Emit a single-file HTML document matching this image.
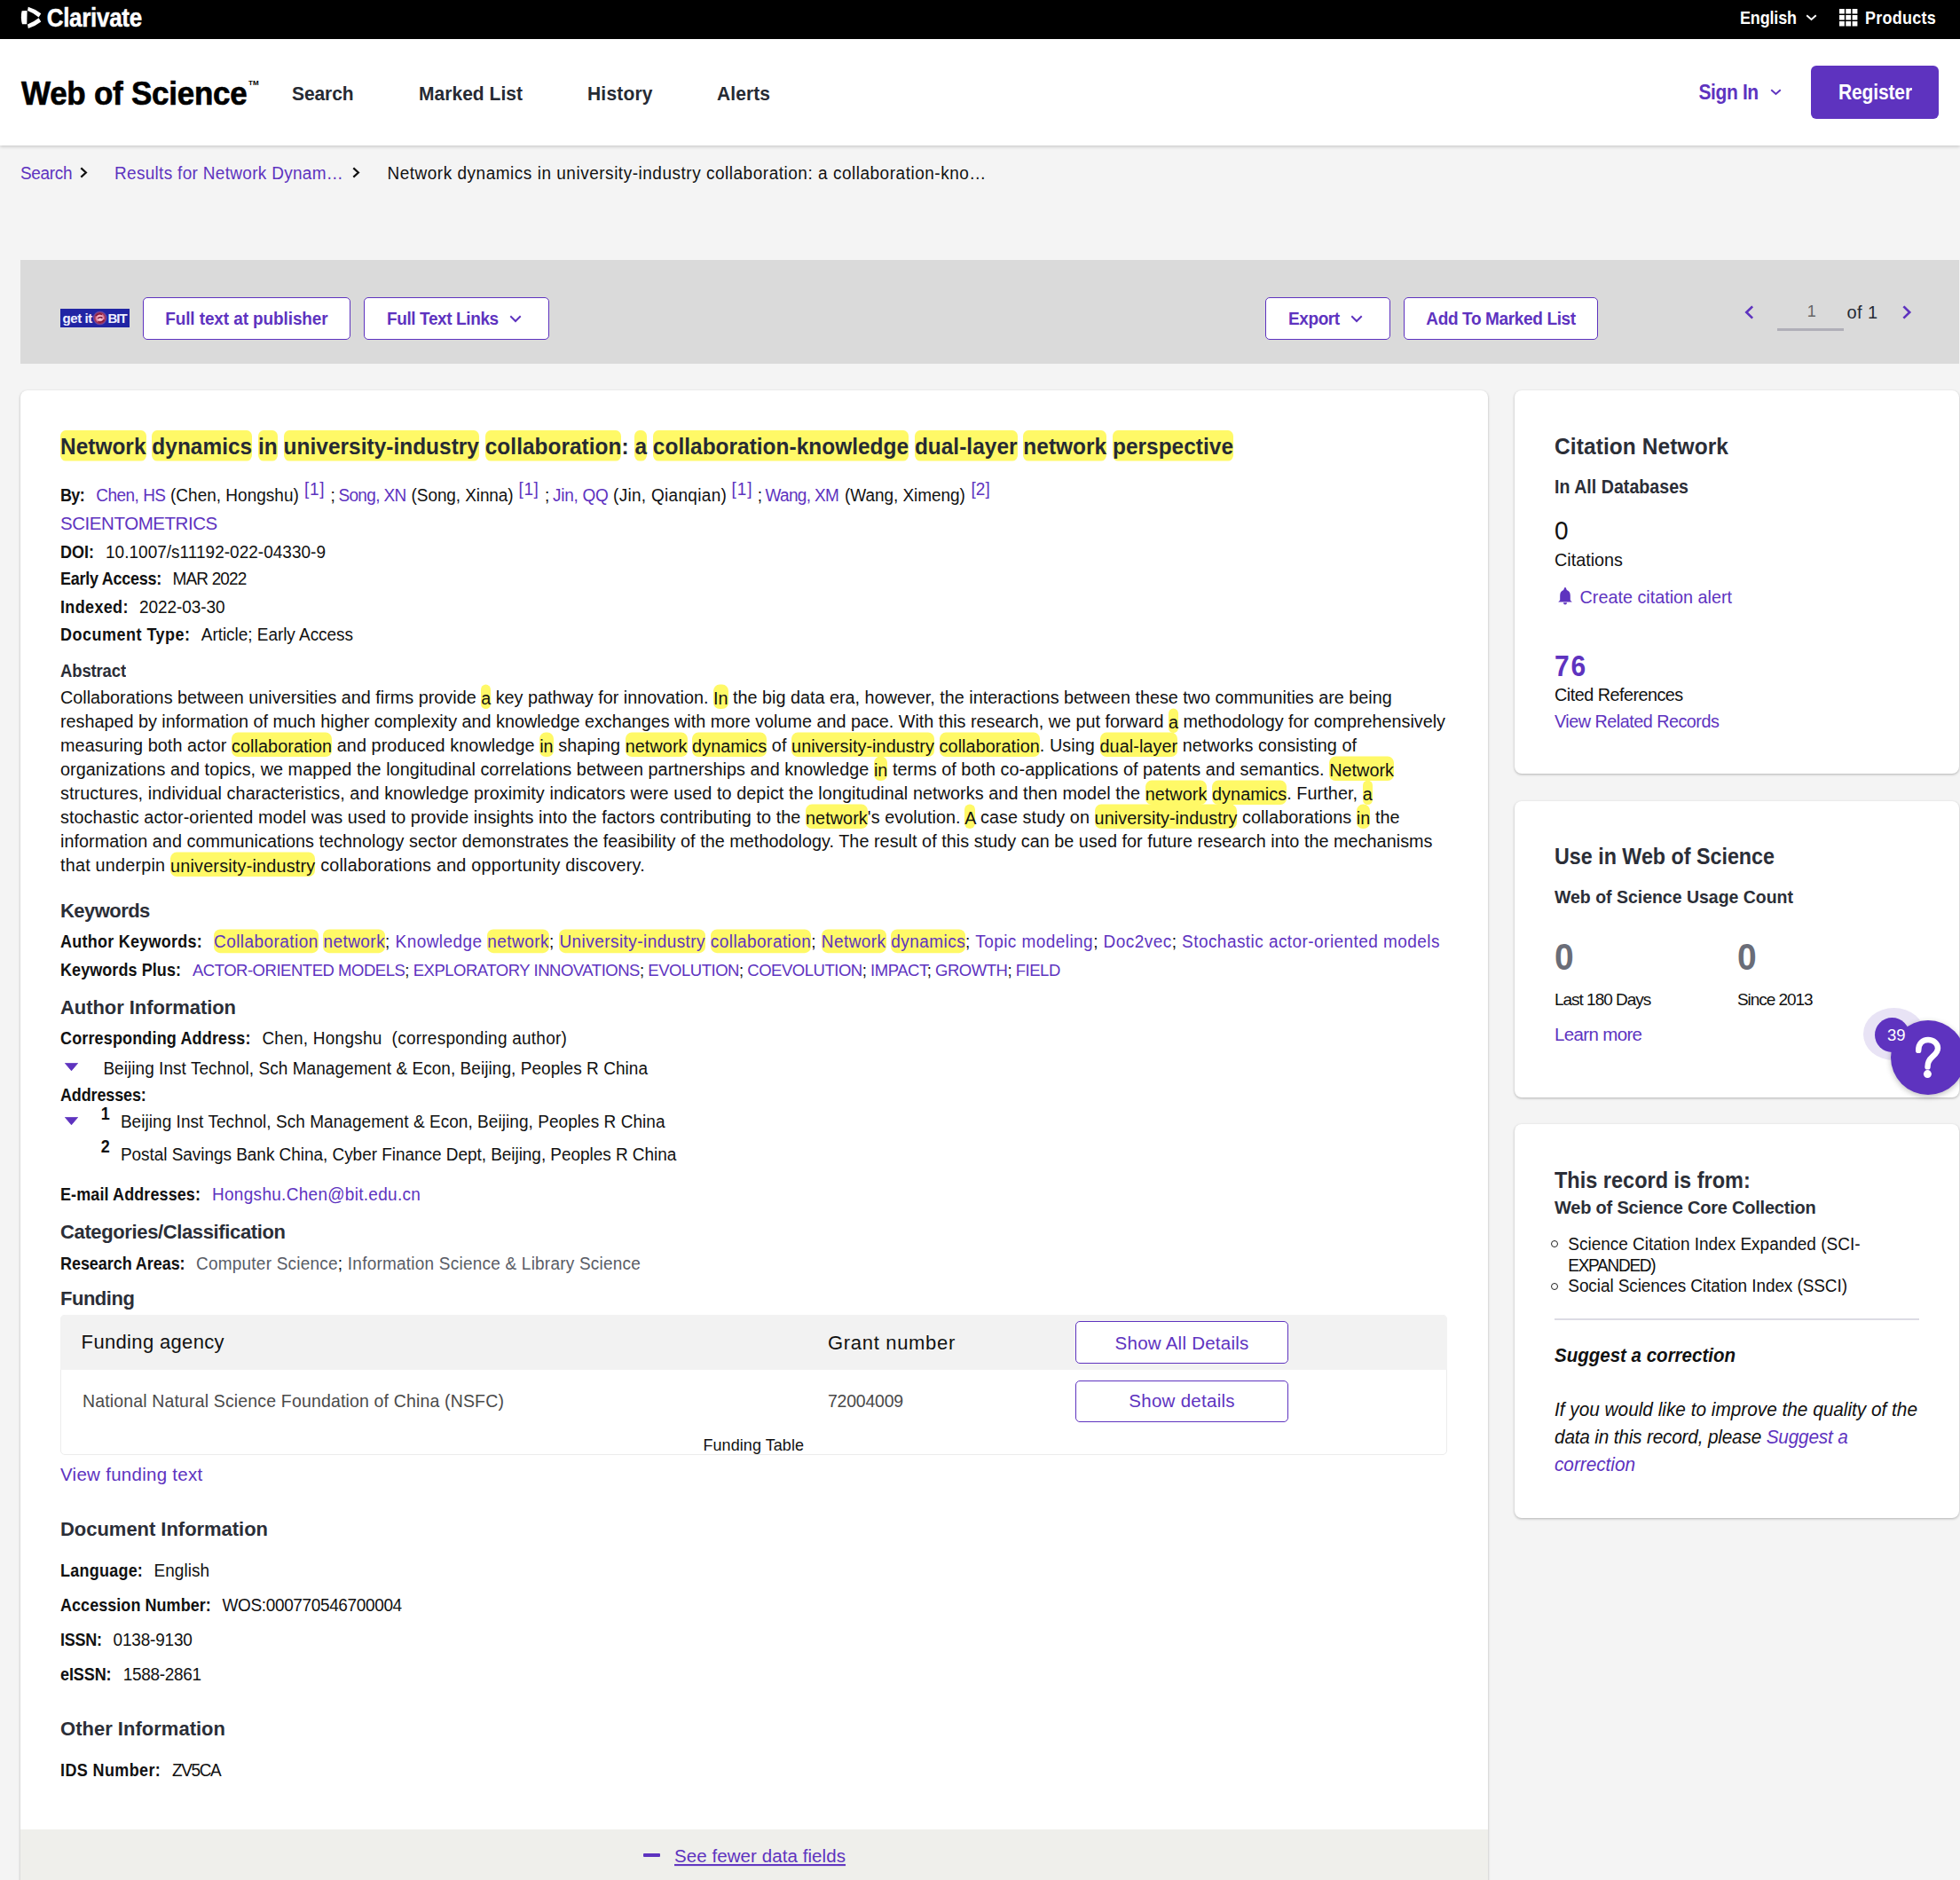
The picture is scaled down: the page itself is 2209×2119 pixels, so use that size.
<!DOCTYPE html>
<html><head><meta charset="utf-8"><title>Web of Science</title><style>
html,body{margin:0;padding:0}
body{width:2209px;height:2119px;overflow:hidden;position:relative;background:#f4f4f4;font-family:"Liberation Sans",sans-serif}
.t{position:absolute;white-space:nowrap;line-height:1}
.h1{background:#fff967;border-radius:6px;padding:3.2px 0 2.2px}
.h2{background:#fff967;border-radius:7px;padding:3.5px 0 1.6px}
.h3{background:#fff967;border-radius:7px;padding:3.2px 0 2.2px}
</style></head><body>
<div style="position:absolute;left:0px;top:0px;width:2209px;height:44px;background:#000"></div>
<div style="position:absolute;left:0px;top:44px;width:2209px;height:120px;background:#fff;box-shadow:0 1px 4px rgba(0,0,0,.22)"></div>
<svg style="position:absolute;left:0;top:0" width="60" height="44"><g fill="#fff"><path d="M24.6 12.3 L30.6 12.1 L30.3 27.2 L25 27.3 Q22.9 19.8 24.6 12.3 Z"/><path d="M31.8 7.7 Q39.5 10 46.3 15.2 L43.6 19.4 Q37.5 14.6 31 12.1 Z"/><path d="M31.8 31.9 Q39.5 29.6 46.3 24.4 L43.6 20.2 Q37.5 25 31 27.5 Z"/></g></svg>
<svg style="position:absolute;left:2035.5px;top:17px;overflow:visible" width="11.0" height="6"><path d="M1.0 1.0 L5.5 5.0 L10.0 1.0" fill="none" stroke="#fff" stroke-width="2" stroke-linecap="square" stroke-linejoin="miter"/></svg>
<svg style="position:absolute;left:2073px;top:9.5px" width="22" height="21"><g fill="#fff"><rect x="0.0" y="0" width="5.8" height="5.5"/><rect x="0.0" y="7" width="5.8" height="5.5"/><rect x="0.0" y="14" width="5.8" height="5.5"/><rect x="7.3" y="0" width="5.8" height="5.5"/><rect x="7.3" y="7" width="5.8" height="5.5"/><rect x="7.3" y="14" width="5.8" height="5.5"/><rect x="14.6" y="0" width="5.8" height="5.5"/><rect x="14.6" y="7" width="5.8" height="5.5"/><rect x="14.6" y="14" width="5.8" height="5.5"/></g></svg>
<div style="position:absolute;left:280px;top:90px;font:700 8px/1 'Liberation Sans',sans-serif;color:#000">TM</div>
<svg style="position:absolute;left:1995.5px;top:101px;overflow:visible" width="11.0" height="6"><path d="M1.0 1.0 L5.5 5.0 L10.0 1.0" fill="none" stroke="#5e33bf" stroke-width="2" stroke-linecap="square" stroke-linejoin="miter"/></svg>
<div style="position:absolute;left:2041px;top:74px;width:144px;height:60px;background:#5e33bf;border-radius:6px"></div>
<svg style="position:absolute;left:91px;top:189px;overflow:visible" width="7" height="11"><path d="M1.1 1.1 L5.9 5.5 L1.1 9.9" fill="none" stroke="#111" stroke-width="2.2" stroke-linecap="square" stroke-linejoin="miter"/></svg>
<svg style="position:absolute;left:398px;top:189px;overflow:visible" width="7" height="11"><path d="M1.1 1.1 L5.9 5.5 L1.1 9.9" fill="none" stroke="#111" stroke-width="2.2" stroke-linecap="square" stroke-linejoin="miter"/></svg>
<div style="position:absolute;left:23px;top:293px;width:2185px;height:117px;background:#dadada"></div>
<div style="position:absolute;left:68px;top:348px;width:78px;height:21px;background:#2125a4"></div>
<div style="position:absolute;left:70.5px;top:350px;font:700 15px/17px 'Liberation Sans',sans-serif;color:#eef0ff;letter-spacing:-0.4px">get it</div>
<svg style="position:absolute;left:104px;top:350px" width="18" height="18"><defs><radialGradient id="sw"><stop offset="0" stop-color="#ffe8f0"/><stop offset="0.45" stop-color="#f0a0b8"/><stop offset="0.75" stop-color="#a03050"/><stop offset="1" stop-color="#8060c0" stop-opacity="0.6"/></radialGradient></defs><circle cx="8.7" cy="8.5" r="7.8" fill="url(#sw)"/><path d="M4 6 Q7 2.5 11 4.5 M13.5 10.5 Q10.5 14.5 6.5 12.5 M6 9 Q8.7 6.5 11.5 8.5" fill="none" stroke="#801838" stroke-width="1.6"/></svg>
<div style="position:absolute;left:121.5px;top:350px;font:700 15px/17px 'Liberation Sans',sans-serif;color:#eef0ff;letter-spacing:-1px">BIT</div>
<div style="position:absolute;left:161px;top:335px;width:234px;height:48px;box-sizing:border-box;background:#fff;border:1.5px solid #5e33bf;border-radius:5px"></div>
<div style="position:absolute;left:410px;top:335px;width:209px;height:48px;box-sizing:border-box;background:#fff;border:1.5px solid #5e33bf;border-radius:5px"></div>
<svg style="position:absolute;left:575px;top:356px;overflow:visible" width="12" height="7"><path d="M1.0 1.0 L6.0 6.0 L11.0 1.0" fill="none" stroke="#5e33bf" stroke-width="2" stroke-linecap="square" stroke-linejoin="miter"/></svg>
<div style="position:absolute;left:1426px;top:335px;width:141px;height:48px;box-sizing:border-box;background:#fff;border:1.5px solid #5e33bf;border-radius:5px"></div>
<svg style="position:absolute;left:1523px;top:356px;overflow:visible" width="12" height="7"><path d="M1.0 1.0 L6.0 6.0 L11.0 1.0" fill="none" stroke="#5e33bf" stroke-width="2" stroke-linecap="square" stroke-linejoin="miter"/></svg>
<div style="position:absolute;left:1582px;top:335px;width:219px;height:48px;box-sizing:border-box;background:#fff;border:1.5px solid #5e33bf;border-radius:5px"></div>
<svg style="position:absolute;left:1966.5px;top:344.5px;overflow:visible" width="8.5" height="14.0"><path d="M7.2 1.3 L1.3 7.0 L7.2 12.7" fill="none" stroke="#5e33bf" stroke-width="2.6" stroke-linecap="square" stroke-linejoin="miter"/></svg>
<svg style="position:absolute;left:2145px;top:344.5px;overflow:visible" width="8.5" height="14.0"><path d="M1.3 1.3 L7.2 7.0 L1.3 12.7" fill="none" stroke="#5e33bf" stroke-width="2.6" stroke-linecap="square" stroke-linejoin="miter"/></svg>
<div style="position:absolute;left:2003px;top:370px;width:75px;height:3px;background:#b0afb8"></div>
<div style="position:absolute;left:23px;top:440px;width:1654px;height:1695px;background:#fff;border-radius:8px;box-shadow:0 1px 3px rgba(0,0,0,.28)"></div>
<div style="position:absolute;left:23px;top:2062px;width:1654px;height:73px;background:#efefeb;border-radius:0 0 8px 8px"></div>
<div style="position:absolute;left:1707px;top:440px;width:501px;height:432px;background:#fff;border-radius:8px;box-shadow:0 1px 3px rgba(0,0,0,.28)"></div>
<div style="position:absolute;left:1707px;top:902.5px;width:501px;height:334.5px;background:#fff;border-radius:8px;box-shadow:0 1px 3px rgba(0,0,0,.28)"></div>
<div style="position:absolute;left:1707px;top:1267px;width:501px;height:444px;background:#fff;border-radius:8px;box-shadow:0 1px 3px rgba(0,0,0,.28)"></div>
<svg style="position:absolute;left:73px;top:1198px" width="15" height="9"><path d="M0.4 0.4 L14.6 0.4 L7.5 8.8 Z" fill="#5e33bf" stroke="#5e33bf" stroke-width="0.8" stroke-linejoin="round"/></svg>
<svg style="position:absolute;left:73px;top:1259px" width="15" height="9"><path d="M0.4 0.4 L14.6 0.4 L7.5 8.8 Z" fill="#5e33bf" stroke="#5e33bf" stroke-width="0.8" stroke-linejoin="round"/></svg>
<div style="position:absolute;left:68px;top:1482.4px;width:1563.4px;height:157.5999999999999px;box-sizing:border-box;border:1px solid #ececec;border-radius:5px;background:#fff"></div>
<div style="position:absolute;left:68px;top:1482.4px;width:1563.4px;height:61.59999999999991px;background:#f2f2f2;border-radius:5px 5px 0 0"></div>
<div style="position:absolute;left:1212px;top:1489px;width:240px;height:47.5px;box-sizing:border-box;background:#fff;border:1.5px solid #5e33bf;border-radius:5px"></div>
<div style="position:absolute;left:1212px;top:1556.4px;width:240px;height:47.0px;box-sizing:border-box;background:#fff;border:1.5px solid #5e33bf;border-radius:5px"></div>
<div style="position:absolute;left:724.5px;top:2089px;width:19.5px;height:4px;background:#5e33bf;border-radius:1px"></div>
<svg style="position:absolute;left:1756px;top:662px" width="16" height="20"><g fill="#5e33bf"><path d="M8 0 C9 0 9.3 2 9.8 3 C12.4 3.8 13.8 6.2 13.8 9.2 L13.8 14.4 L15.8 16.4 L0.2 16.4 L2.2 14.4 L2.2 9.2 C2.2 6.2 3.6 3.8 6.2 3 C6.7 2 7 0 8 0 Z"/><path d="M6 17.2 L10 17.2 Q10 19.5 8 19.5 Q6 19.5 6 17.2 Z"/></g></svg>
<div style="position:absolute;left:1748px;top:1398px;width:8px;height:8px;box-sizing:border-box;border:1px solid #222;border-radius:50%"></div>
<div style="position:absolute;left:1748px;top:1446.4px;width:8px;height:8px;box-sizing:border-box;border:1px solid #222;border-radius:50%"></div>
<div style="position:absolute;left:1752px;top:1486px;width:411px;height:2px;background:#dcdbe4"></div>
<div style="position:absolute;left:2100px;top:1136.3px;width:69px;height:58.4px;border-radius:50%;background:#e8e3f5"></div>
<div style="position:absolute;left:2131px;top:1150px;width:84px;height:84px;border-radius:50%;background:#5e33bf;box-shadow:0 2px 6px rgba(0,0,0,.25)"></div>
<div style="position:absolute;left:2113px;top:1147px;width:39px;height:39px;border-radius:50%;background:#5e33bf"></div>
<div style="position:absolute;left:2127px;top:1158px;font:400 18.5px/1 'Liberation Sans',sans-serif;color:#fff">39</div>
<svg style="position:absolute;left:2150px;top:1160px" width="59" height="60"><path d="M12.2 23.9 C12.2 16 17 12 23 12 C29.5 12 34 16.5 34 21.5 C34 26 31 28.5 28 31 C24.5 34 22.5 37 22.5 42.4" fill="none" stroke="#fff" stroke-width="6.4" stroke-linecap="round"/><circle cx="22.4" cy="50.6" r="4.5" fill="#fff"/></svg>
<div class="t" id="t0" style="left:52.7px;top:8px;font-size:26px;font-weight:700;color:#fff;letter-spacing:-0.299px;transform:scaleY(1.1);transform-origin:0 22px;-webkit-text-stroke:0.4px #fff">Clarivate</div>
<div class="t" id="t1" style="left:1961.0px;top:12px;font-size:18px;font-weight:700;color:#fff;letter-spacing:-0.156px;transform:scaleY(1.12);transform-origin:0 15px;">English</div>
<div class="t" id="t2" style="left:2102.0px;top:12px;font-size:18px;font-weight:700;color:#fff;letter-spacing:0.265px;transform:scaleY(1.12);transform-origin:0 15px;">Products</div>
<div class="t" id="t3" style="left:24.0px;top:88px;font-size:35px;font-weight:700;color:#000;letter-spacing:-0.255px;transform:scaleY(1.05);transform-origin:0 30px;-webkit-text-stroke:0.6px #000">Web of Science</div>
<div class="t" id="t4" style="left:329.0px;top:95px;font-size:21px;font-weight:700;color:#262a33;letter-spacing:-0.081px;transform:scaleY(1.09);transform-origin:0 18px;">Search</div>
<div class="t" id="t5" style="left:472.0px;top:95px;font-size:21px;font-weight:700;color:#262a33;letter-spacing:0.028px;transform:scaleY(1.09);transform-origin:0 18px;">Marked List</div>
<div class="t" id="t6" style="left:662.0px;top:95px;font-size:21px;font-weight:700;color:#262a33;letter-spacing:0.191px;transform:scaleY(1.09);transform-origin:0 18px;">History</div>
<div class="t" id="t7" style="left:808.0px;top:95px;font-size:21px;font-weight:700;color:#262a33;letter-spacing:0.085px;transform:scaleY(1.09);transform-origin:0 18px;">Alerts</div>
<div class="t" id="t8" style="left:1914.5px;top:94px;font-size:21px;font-weight:700;color:#5e33bf;letter-spacing:-0.385px;transform:scaleY(1.1);transform-origin:0 18px;">Sign In</div>
<div class="t" id="t9" style="left:2072.0px;top:94px;font-size:21px;font-weight:700;color:#fff;letter-spacing:-0.138px;transform:scaleY(1.1);transform-origin:0 18px;">Register</div>
<div class="t" id="t10" style="left:22.9px;top:186px;font-size:19px;font-weight:400;color:#5e33bf;letter-spacing:-0.310px;transform:scaleY(1.08);transform-origin:0 16px;">Search</div>
<div class="t" id="t11" style="left:129.0px;top:186px;font-size:19px;font-weight:400;color:#5e33bf;letter-spacing:0.305px;transform:scaleY(1.08);transform-origin:0 16px;">Results for Network Dynam…</div>
<div class="t" id="t12" style="left:436.4px;top:186px;font-size:19px;font-weight:400;color:#111;letter-spacing:0.516px;transform:scaleY(1.08);transform-origin:0 16px;">Network dynamics in university-industry collaboration: a collaboration-kno…</div>
<div class="t" id="t13" style="left:186.2px;top:350px;font-size:19px;font-weight:700;color:#5e33bf;letter-spacing:-0.108px;transform:scaleY(1.065);transform-origin:0 16px;">Full text at publisher</div>
<div class="t" id="t14" style="left:436.0px;top:350px;font-size:19px;font-weight:700;color:#5e33bf;letter-spacing:-0.387px;transform:scaleY(1.065);transform-origin:0 16px;">Full Text Links</div>
<div class="t" id="t15" style="left:1452.0px;top:350px;font-size:19px;font-weight:700;color:#5e33bf;letter-spacing:-0.398px;transform:scaleY(1.065);transform-origin:0 16px;">Export</div>
<div class="t" id="t16" style="left:1607.3px;top:350px;font-size:19px;font-weight:700;color:#5e33bf;letter-spacing:-0.354px;transform:scaleY(1.065);transform-origin:0 16px;">Add To Marked List</div>
<div class="t" id="t17" style="left:2036.7px;top:342px;font-size:18px;font-weight:400;color:#666;transform:scaleY(1.03);transform-origin:0 15px;">1</div>
<div class="t" id="t18" style="left:2081.6px;top:342px;font-size:20px;font-weight:400;color:#262a33;letter-spacing:0.383px;transform:scaleY(1.03);transform-origin:0 17px;">of 1</div>
<div class="t" id="t19" style="left:68.0px;top:492px;font-size:24.4px;font-weight:700;color:#262a33;letter-spacing:0.040px;transform:scaleY(1.078);transform-origin:0 20px;"><span class="h1">Network</span> <span class="h1">dynamics</span> <span class="h1">in</span> <span class="h1">university-industry</span> <span class="h1">collaboration</span>: <span class="h1">a</span> <span class="h1">collaboration-knowledge</span> <span class="h1">dual-layer</span> <span class="h1">network</span> <span class="h1">perspective</span></div>
<div class="t" id="t20" style="left:67.9px;top:550px;font-size:18px;font-weight:700;color:#111;letter-spacing:-0.606px;transform:scaleY(1.09);transform-origin:0 15px;">By:</div>
<div class="t" id="t21" style="left:108.2px;top:549px;font-size:19px;font-weight:400;color:#5e33bf;letter-spacing:-0.503px;transform:scaleY(1.03);transform-origin:0 16px;">Chen, HS</div>
<div class="t" id="t22" style="left:381.4px;top:549px;font-size:19px;font-weight:400;color:#5e33bf;letter-spacing:-0.630px;transform:scaleY(1.03);transform-origin:0 16px;">Song, XN</div>
<div class="t" id="t23" style="left:623.0px;top:549px;font-size:19px;font-weight:400;color:#5e33bf;letter-spacing:-0.262px;transform:scaleY(1.03);transform-origin:0 16px;">Jin, QQ</div>
<div class="t" id="t24" style="left:862.4px;top:549px;font-size:19px;font-weight:400;color:#5e33bf;letter-spacing:-0.640px;transform:scaleY(1.03);transform-origin:0 16px;">Wang, XM</div>
<div class="t" id="t25" style="left:192.0px;top:549px;font-size:19px;font-weight:400;color:#111;letter-spacing:0.007px;transform:scaleY(1.03);transform-origin:0 16px;">(Chen, Hongshu)</div>
<div class="t" id="t26" style="left:463.6px;top:549px;font-size:19px;font-weight:400;color:#111;letter-spacing:-0.095px;transform:scaleY(1.03);transform-origin:0 16px;">(Song, Xinna)</div>
<div class="t" id="t27" style="left:691.0px;top:549px;font-size:19px;font-weight:400;color:#111;letter-spacing:0.306px;transform:scaleY(1.03);transform-origin:0 16px;">(Jin, Qianqian)</div>
<div class="t" id="t28" style="left:952.0px;top:549px;font-size:19px;font-weight:400;color:#111;letter-spacing:-0.049px;transform:scaleY(1.03);transform-origin:0 16px;">(Wang, Ximeng)</div>
<div class="t" id="t29" style="left:342.9px;top:542px;font-size:19px;font-weight:400;color:#5e33bf;letter-spacing:0.790px;transform:scaleY(1.03);transform-origin:0 16px;">[1]</div>
<div class="t" id="t30" style="left:584.6px;top:542px;font-size:19px;font-weight:400;color:#5e33bf;letter-spacing:0.510px;transform:scaleY(1.03);transform-origin:0 16px;">[1]</div>
<div class="t" id="t31" style="left:824.6px;top:542px;font-size:19px;font-weight:400;color:#5e33bf;letter-spacing:0.910px;transform:scaleY(1.03);transform-origin:0 16px;">[1]</div>
<div class="t" id="t32" style="left:1094.4px;top:542px;font-size:19px;font-weight:400;color:#5e33bf;letter-spacing:0.190px;transform:scaleY(1.03);transform-origin:0 16px;">[2]</div>
<div class="t" id="t33" style="left:372.5px;top:549px;font-size:19px;font-weight:400;color:#111;transform:scaleY(1.03);transform-origin:0 16px;">;</div>
<div class="t" id="t34" style="left:614.0px;top:549px;font-size:19px;font-weight:400;color:#111;transform:scaleY(1.03);transform-origin:0 16px;">;</div>
<div class="t" id="t35" style="left:853.7px;top:549px;font-size:19px;font-weight:400;color:#111;transform:scaleY(1.03);transform-origin:0 16px;">;</div>
<div class="t" id="t36" style="left:68.0px;top:580px;font-size:20.5px;font-weight:400;color:#5e33bf;letter-spacing:-0.444px;transform:scaleY(1.03);transform-origin:0 17px;">SCIENTOMETRICS</div>
<div class="t" id="t37" style="left:68.0px;top:614px;font-size:18px;font-weight:700;color:#111;transform:scaleY(1.09);transform-origin:0 15px;">DOI:</div>
<div class="t" id="t38" style="left:119.0px;top:613px;font-size:19px;font-weight:400;color:#111;letter-spacing:0.017px;transform:scaleY(1.03);transform-origin:0 16px;">10.1007/s11192-022-04330-9</div>
<div class="t" id="t39" style="left:68.0px;top:644px;font-size:18px;font-weight:700;color:#111;letter-spacing:-0.274px;transform:scaleY(1.09);transform-origin:0 15px;">Early Access:</div>
<div class="t" id="t40" style="left:194.6px;top:643px;font-size:19px;font-weight:400;color:#111;letter-spacing:-0.864px;transform:scaleY(1.03);transform-origin:0 16px;">MAR 2022</div>
<div class="t" id="t41" style="left:68.0px;top:676px;font-size:18px;font-weight:700;color:#111;letter-spacing:0.345px;transform:scaleY(1.09);transform-origin:0 15px;">Indexed:</div>
<div class="t" id="t42" style="left:157.0px;top:675px;font-size:19px;font-weight:400;color:#111;letter-spacing:-0.063px;transform:scaleY(1.03);transform-origin:0 16px;">2022-03-30</div>
<div class="t" id="t43" style="left:68.0px;top:707px;font-size:18px;font-weight:700;color:#111;letter-spacing:0.490px;transform:scaleY(1.09);transform-origin:0 15px;">Document Type:</div>
<div class="t" id="t44" style="left:226.8px;top:706px;font-size:19px;font-weight:400;color:#111;letter-spacing:-0.044px;transform:scaleY(1.03);transform-origin:0 16px;">Article; Early Access</div>
<div class="t" id="t45" style="left:68.0px;top:748px;font-size:18.5px;font-weight:700;color:#2b2e37;letter-spacing:-0.142px;transform:scaleY(1.07);transform-origin:0 15px;">Abstract</div>
<div class="t" id="t46" style="left:68.0px;top:777px;font-size:19.8px;font-weight:400;color:#111;letter-spacing:0.005px;transform:scaleY(1.02);transform-origin:0 16px;">Collaborations between universities and firms provide <span class="h2">a</span> key pathway for innovation. <span class="h2">In</span> the big data era, however, the interactions between these two communities are being</div>
<div class="t" id="t47" style="left:68.0px;top:804px;font-size:19.8px;font-weight:400;color:#111;letter-spacing:-0.009px;transform:scaleY(1.02);transform-origin:0 16px;">reshaped by information of much higher complexity and knowledge exchanges with more volume and pace. With this research, we put forward <span class="h2">a</span> methodology for comprehensively</div>
<div class="t" id="t48" style="left:68.0px;top:831px;font-size:19.8px;font-weight:400;color:#111;letter-spacing:0.079px;transform:scaleY(1.02);transform-origin:0 16px;">measuring both actor <span class="h2">collaboration</span> and produced knowledge <span class="h2">in</span> shaping <span class="h2">network</span> <span class="h2">dynamics</span> of <span class="h2">university-industry</span> <span class="h2">collaboration</span>. Using <span class="h2">dual-layer</span> networks consisting of</div>
<div class="t" id="t49" style="left:68.0px;top:858px;font-size:19.8px;font-weight:400;color:#111;letter-spacing:0.052px;transform:scaleY(1.02);transform-origin:0 16px;">organizations and topics, we mapped the longitudinal correlations between partnerships and knowledge <span class="h2">in</span> terms of both co-applications of patents and semantics. <span class="h2">Network</span></div>
<div class="t" id="t50" style="left:68.0px;top:885px;font-size:19.8px;font-weight:400;color:#111;letter-spacing:0.078px;transform:scaleY(1.02);transform-origin:0 16px;">structures, individual characteristics, and knowledge proximity indicators were used to depict the longitudinal networks and then model the <span class="h2">network</span> <span class="h2">dynamics</span>. Further, <span class="h2">a</span></div>
<div class="t" id="t51" style="left:68.0px;top:912px;font-size:19.8px;font-weight:400;color:#111;letter-spacing:0.078px;transform:scaleY(1.02);transform-origin:0 16px;">stochastic actor-oriented model was used to provide insights into the factors contributing to the <span class="h2">network</span>'s evolution. <span class="h2">A</span> case study on <span class="h2">university-industry</span> collaborations <span class="h2">in</span> the</div>
<div class="t" id="t52" style="left:68.0px;top:939px;font-size:19.8px;font-weight:400;color:#111;letter-spacing:0.039px;transform:scaleY(1.02);transform-origin:0 16px;">information and communications technology sector demonstrates the feasibility of the methodology. The result of this study can be used for future research into the mechanisms</div>
<div class="t" id="t53" style="left:68.0px;top:966px;font-size:19.8px;font-weight:400;color:#111;letter-spacing:0.214px;transform:scaleY(1.02);transform-origin:0 16px;">that underpin <span class="h2">university-industry</span> collaborations and opportunity discovery.</div>
<div class="t" id="t54" style="left:68.0px;top:1016px;font-size:22px;font-weight:700;color:#2b2e37;letter-spacing:-0.554px;transform:scaleY(1.04);transform-origin:0 18px;">Keywords</div>
<div class="t" id="t55" style="left:68.0px;top:1053px;font-size:18px;font-weight:700;color:#111;letter-spacing:0.257px;transform:scaleY(1.09);transform-origin:0 15px;">Author Keywords:</div>
<div class="t" id="t56" style="left:241.0px;top:1052px;font-size:19px;font-weight:400;color:#5e33bf;letter-spacing:0.443px;transform:scaleY(1.03);transform-origin:0 16px;"><span class="h3">Collaboration</span> <span class="h3">network</span><span style="color:#111">; </span>Knowledge <span class="h3">network</span><span style="color:#111">; </span><span class="h3">University-industry</span> <span class="h3">collaboration</span><span style="color:#111">; </span><span class="h3">Network</span> <span class="h3">dynamics</span><span style="color:#111">; </span>Topic modeling<span style="color:#111">; </span>Doc2vec<span style="color:#111">; </span>Stochastic actor-oriented models</div>
<div class="t" id="t57" style="left:68.0px;top:1085px;font-size:18px;font-weight:700;color:#111;letter-spacing:0.071px;transform:scaleY(1.09);transform-origin:0 15px;">Keywords Plus:</div>
<div class="t" id="t58" style="left:216.9px;top:1085px;font-size:18.5px;font-weight:400;color:#5e33bf;letter-spacing:-0.476px;transform:scaleY(1.03);transform-origin:0 15px;">ACTOR-ORIENTED MODELS<span style="color:#111">; </span>EXPLORATORY INNOVATIONS<span style="color:#111">; </span>EVOLUTION<span style="color:#111">; </span>COEVOLUTION<span style="color:#111">; </span>IMPACT<span style="color:#111">; </span>GROWTH<span style="color:#111">; </span>FIELD</div>
<div class="t" id="t59" style="left:68.0px;top:1125px;font-size:22px;font-weight:700;color:#2b2e37;letter-spacing:-0.069px;transform:scaleY(1.04);transform-origin:0 18px;">Author Information</div>
<div class="t" id="t60" style="left:68.0px;top:1162px;font-size:18px;font-weight:700;color:#111;letter-spacing:0.151px;transform:scaleY(1.09);transform-origin:0 15px;">Corresponding Address:</div>
<div class="t" id="t61" style="left:295.4px;top:1161px;font-size:19px;font-weight:400;color:#111;letter-spacing:0.241px;transform:scaleY(1.03);transform-origin:0 16px;">Chen, Hongshu&nbsp; (corresponding author)</div>
<div class="t" id="t62" style="left:116.4px;top:1195px;font-size:19px;font-weight:400;color:#111;letter-spacing:0.051px;transform:scaleY(1.03);transform-origin:0 16px;">Beijing Inst Technol, Sch Management &amp; Econ, Beijing, Peoples R China</div>
<div class="t" id="t63" style="left:68.0px;top:1226px;font-size:18px;font-weight:700;color:#111;letter-spacing:-0.131px;transform:scaleY(1.09);transform-origin:0 15px;">Addresses:</div>
<div class="t" id="t64" style="left:113.8px;top:1247px;font-size:18px;font-weight:700;color:#111;transform:scaleY(1.09);transform-origin:0 15px;">1</div>
<div class="t" id="t65" style="left:135.9px;top:1255px;font-size:19px;font-weight:400;color:#111;letter-spacing:0.051px;transform:scaleY(1.03);transform-origin:0 16px;">Beijing Inst Technol, Sch Management &amp; Econ, Beijing, Peoples R China</div>
<div class="t" id="t66" style="left:113.8px;top:1284px;font-size:18px;font-weight:700;color:#111;transform:scaleY(1.09);transform-origin:0 15px;">2</div>
<div class="t" id="t67" style="left:135.9px;top:1292px;font-size:19px;font-weight:400;color:#111;letter-spacing:-0.043px;transform:scaleY(1.03);transform-origin:0 16px;">Postal Savings Bank China, Cyber Finance Dept, Beijing, Peoples R China</div>
<div class="t" id="t68" style="left:68.0px;top:1338px;font-size:18px;font-weight:700;color:#111;letter-spacing:0.097px;transform:scaleY(1.09);transform-origin:0 15px;">E-mail Addresses:</div>
<div class="t" id="t69" style="left:239.0px;top:1337px;font-size:19px;font-weight:400;color:#5e33bf;letter-spacing:0.292px;transform:scaleY(1.03);transform-origin:0 16px;">Hongshu.Chen@bit.edu.cn</div>
<div class="t" id="t70" style="left:68.0px;top:1378px;font-size:22px;font-weight:700;color:#2b2e37;letter-spacing:-0.370px;transform:scaleY(1.04);transform-origin:0 18px;">Categories/Classification</div>
<div class="t" id="t71" style="left:68.0px;top:1416px;font-size:18px;font-weight:700;color:#111;letter-spacing:-0.057px;transform:scaleY(1.09);transform-origin:0 15px;">Research Areas:</div>
<div class="t" id="t72" style="left:221.0px;top:1415px;font-size:19px;font-weight:400;color:#595c66;letter-spacing:0.221px;transform:scaleY(1.03);transform-origin:0 16px;">Computer Science<span style="color:#111">; </span>Information Science &amp; Library Science</div>
<div class="t" id="t73" style="left:68.0px;top:1453px;font-size:22px;font-weight:700;color:#2b2e37;letter-spacing:-0.485px;transform:scaleY(1.04);transform-origin:0 18px;">Funding</div>
<div class="t" id="t74" style="left:91.6px;top:1502px;font-size:22px;font-weight:400;color:#111;letter-spacing:0.344px;transform:scaleY(1.03);transform-origin:0 18px;">Funding agency</div>
<div class="t" id="t75" style="left:933.0px;top:1503px;font-size:22px;font-weight:400;color:#111;letter-spacing:0.684px;transform:scaleY(1.03);transform-origin:0 18px;">Grant number</div>
<div class="t" id="t76" style="left:1256.6px;top:1504px;font-size:20.5px;font-weight:400;color:#5e33bf;letter-spacing:0.246px;transform:scaleY(1.03);transform-origin:0 17px;">Show All Details</div>
<div class="t" id="t77" style="left:92.9px;top:1570px;font-size:19.5px;font-weight:400;color:#4a4a4a;letter-spacing:0.157px;transform:scaleY(1.03);transform-origin:0 16px;">National Natural Science Foundation of China (NSFC)</div>
<div class="t" id="t78" style="left:933.0px;top:1570px;font-size:19.5px;font-weight:400;color:#4a4a4a;letter-spacing:-0.235px;transform:scaleY(1.03);transform-origin:0 16px;">72004009</div>
<div class="t" id="t79" style="left:1272.3px;top:1569px;font-size:20.5px;font-weight:400;color:#5e33bf;letter-spacing:0.275px;transform:scaleY(1.03);transform-origin:0 17px;">Show details</div>
<div class="t" id="t80" style="left:792.5px;top:1620px;font-size:18px;font-weight:400;color:#111;letter-spacing:0.059px;transform:scaleY(1.03);transform-origin:0 15px;">Funding Table</div>
<div class="t" id="t81" style="left:68.0px;top:1652px;font-size:20.5px;font-weight:400;color:#5e33bf;letter-spacing:0.281px;transform:scaleY(1.03);transform-origin:0 17px;">View funding text</div>
<div class="t" id="t82" style="left:68.0px;top:1713px;font-size:22px;font-weight:700;color:#2b2e37;letter-spacing:-0.034px;transform:scaleY(1.04);transform-origin:0 18px;">Document Information</div>
<div class="t" id="t83" style="left:68.0px;top:1762px;font-size:18px;font-weight:700;color:#111;letter-spacing:0.233px;transform:scaleY(1.09);transform-origin:0 15px;">Language:</div>
<div class="t" id="t84" style="left:173.5px;top:1761px;font-size:19px;font-weight:400;color:#111;letter-spacing:0.026px;transform:scaleY(1.03);transform-origin:0 16px;">English</div>
<div class="t" id="t85" style="left:68.0px;top:1801px;font-size:18px;font-weight:700;color:#111;letter-spacing:0.045px;transform:scaleY(1.09);transform-origin:0 15px;">Accession Number:</div>
<div class="t" id="t86" style="left:250.5px;top:1800px;font-size:19px;font-weight:400;color:#111;letter-spacing:-0.361px;transform:scaleY(1.03);transform-origin:0 16px;">WOS:000770546700004</div>
<div class="t" id="t87" style="left:68.0px;top:1840px;font-size:18px;font-weight:700;color:#111;letter-spacing:-0.270px;transform:scaleY(1.09);transform-origin:0 15px;">ISSN:</div>
<div class="t" id="t88" style="left:127.6px;top:1839px;font-size:19px;font-weight:400;color:#111;letter-spacing:-0.197px;transform:scaleY(1.03);transform-origin:0 16px;">0138-9130</div>
<div class="t" id="t89" style="left:68.0px;top:1879px;font-size:18px;font-weight:700;color:#111;letter-spacing:-0.097px;transform:scaleY(1.09);transform-origin:0 15px;">eISSN:</div>
<div class="t" id="t90" style="left:138.8px;top:1878px;font-size:19px;font-weight:400;color:#111;letter-spacing:-0.315px;transform:scaleY(1.03);transform-origin:0 16px;">1588-2861</div>
<div class="t" id="t91" style="left:68.0px;top:1938px;font-size:22px;font-weight:700;color:#2b2e37;letter-spacing:0.013px;transform:scaleY(1.04);transform-origin:0 18px;">Other Information</div>
<div class="t" id="t92" style="left:68.0px;top:1987px;font-size:18px;font-weight:700;color:#111;letter-spacing:0.379px;transform:scaleY(1.09);transform-origin:0 15px;">IDS Number:</div>
<div class="t" id="t93" style="left:193.9px;top:1986px;font-size:19px;font-weight:400;color:#111;letter-spacing:-1.367px;transform:scaleY(1.03);transform-origin:0 16px;">ZV5CA</div>
<div class="t" id="t94" style="left:760.0px;top:2082px;font-size:20.5px;font-weight:400;color:#5e33bf;letter-spacing:0.075px;transform:scaleY(1.03);transform-origin:0 17px;text-decoration:underline;text-underline-offset:2px;text-decoration-thickness:1.5px">See fewer data fields</div>
<div class="t" id="t95" style="left:1752.0px;top:492px;font-size:24.5px;font-weight:700;color:#2b2e37;letter-spacing:0.087px;transform:scaleY(1.07);transform-origin:0 20px;">Citation Network</div>
<div class="t" id="t96" style="left:1752.0px;top:540px;font-size:19.6px;font-weight:700;color:#2b2e37;letter-spacing:0.023px;transform:scaleY(1.09);transform-origin:0 16px;">In All Databases</div>
<div class="t" id="t97" style="left:1752.0px;top:585px;font-size:28px;font-weight:400;color:#111;transform:scaleY(1.03);transform-origin:0 23px;">0</div>
<div class="t" id="t98" style="left:1752.0px;top:622px;font-size:19.8px;font-weight:400;color:#111;letter-spacing:0.004px;">Citations</div>
<div class="t" id="t99" style="left:1780.6px;top:664px;font-size:19.8px;font-weight:400;color:#5e33bf;letter-spacing:-0.006px;">Create citation alert</div>
<div class="t" id="t100" style="left:1752.0px;top:737px;font-size:30px;font-weight:700;color:#5e33bf;letter-spacing:1.750px;transform:scaleY(1.125);transform-origin:0 25px;">76</div>
<div class="t" id="t101" style="left:1752.0px;top:774px;font-size:19.8px;font-weight:400;color:#111;letter-spacing:-0.506px;">Cited References</div>
<div class="t" id="t102" style="left:1752.0px;top:804px;font-size:19.8px;font-weight:400;color:#5e33bf;letter-spacing:-0.500px;">View Related Records</div>
<div class="t" id="t103" style="left:1752.0px;top:955px;font-size:23.3px;font-weight:700;color:#2b2e37;letter-spacing:-0.008px;transform:scaleY(1.07);transform-origin:0 19px;">Use in Web of Science</div>
<div class="t" id="t104" style="left:1752.0px;top:1002px;font-size:19.5px;font-weight:700;color:#2b2e37;letter-spacing:-0.018px;transform:scaleY(1.07);transform-origin:0 16px;">Web of Science Usage Count</div>
<div class="t" id="t105" style="left:1752.0px;top:1060px;font-size:39px;font-weight:700;color:#6a6d78;transform:scaleY(1.09);transform-origin:0 33px;">0</div>
<div class="t" id="t106" style="left:1958.0px;top:1060px;font-size:39px;font-weight:700;color:#6a6d78;transform:scaleY(1.09);transform-origin:0 33px;">0</div>
<div class="t" id="t107" style="left:1752.0px;top:1117px;font-size:19px;font-weight:400;color:#111;letter-spacing:-1.014px;">Last 180 Days</div>
<div class="t" id="t108" style="left:1958.0px;top:1117px;font-size:19px;font-weight:400;color:#111;letter-spacing:-1.061px;">Since 2013</div>
<div class="t" id="t109" style="left:1752.0px;top:1156px;font-size:20.5px;font-weight:400;color:#5e33bf;letter-spacing:-0.647px;">Learn more</div>
<div class="t" id="t110" style="left:1752.0px;top:1320px;font-size:23.5px;font-weight:700;color:#2b2e37;letter-spacing:0.006px;transform:scaleY(1.07);transform-origin:0 19px;">This record is from:</div>
<div class="t" id="t111" style="left:1752.0px;top:1351px;font-size:20px;font-weight:700;color:#2b2e37;letter-spacing:-0.207px;">Web of Science Core Collection</div>
<div class="t" id="t112" style="left:1767.3px;top:1393px;font-size:19px;font-weight:400;color:#111;letter-spacing:-0.009px;transform:scaleY(1.03);transform-origin:0 16px;">Science Citation Index Expanded (SCI-</div>
<div class="t" id="t113" style="left:1767.3px;top:1417px;font-size:19px;font-weight:400;color:#111;letter-spacing:-1.265px;transform:scaleY(1.03);transform-origin:0 16px;">EXPANDED)</div>
<div class="t" id="t114" style="left:1767.3px;top:1440px;font-size:19px;font-weight:400;color:#111;letter-spacing:-0.087px;transform:scaleY(1.03);transform-origin:0 16px;">Social Sciences Citation Index (SSCI)</div>
<div class="t" id="t115" style="left:1752.0px;top:1518px;font-size:20.5px;font-weight:700;color:#111;letter-spacing:0.004px;transform:scaleY(1.09);transform-origin:0 17px;font-style:italic">Suggest a correction</div>
<div class="t" id="t116" style="left:1752.0px;top:1579px;font-size:20.8px;font-weight:400;color:#111;letter-spacing:-0.005px;transform:scaleY(1.03);transform-origin:0 17px;font-style:italic">If you would like to improve the quality of the</div>
<div class="t" id="t117" style="left:1752.0px;top:1610px;font-size:20.8px;font-weight:400;color:#111;letter-spacing:-0.189px;transform:scaleY(1.03);transform-origin:0 17px;font-style:italic">data in this record, please <span style="color:#5e33bf">Suggest a</span></div>
<div class="t" id="t118" style="left:1752.0px;top:1641px;font-size:20.8px;font-weight:400;color:#5e33bf;letter-spacing:-0.033px;transform:scaleY(1.03);transform-origin:0 17px;font-style:italic">correction</div>
</body></html>
